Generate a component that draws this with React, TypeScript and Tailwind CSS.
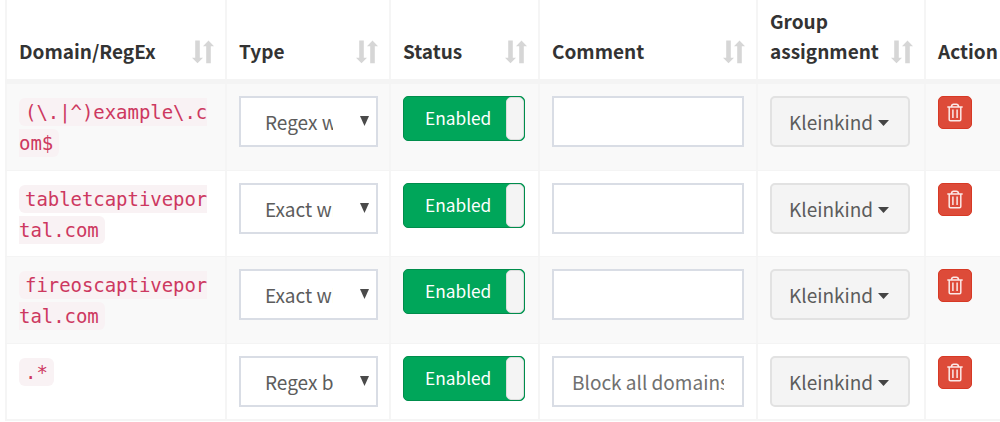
import clsx from 'clsx';

type Domain = {
  lines: string[];
  type: string;
  comment: string;
  height: string;
};

const domains: Domain[] = [
  { lines: ['(\\.|^)example\\.c', 'om$'], type: 'Regex whitelist', comment: '', height: 'h-[87px]' },
  { lines: ['tabletcaptivepor', 'tal.com'], type: 'Exact whitelist', comment: '', height: 'h-[86px]' },
  { lines: ['fireoscaptivepor', 'tal.com'], type: 'Exact whitelist', comment: '', height: 'h-[87px]' },
  { lines: ['.*'], type: 'Regex blacklist', comment: 'Block all domains', height: 'h-[76px]' },
];

const columns = [
  { title: 'Domain/RegEx', sortable: true },
  { title: 'Type', sortable: true },
  { title: 'Status', sortable: true },
  { title: 'Comment', sortable: true },
  { title: 'Group assignment', sortable: true },
  { title: 'Action', sortable: false },
];

const grid = 'grid grid-cols-[220px_164px_149px_218px_168px_76px]';
const cell = 'border-l-2 border-[#f5f5f5] pl-3 pt-3';

function SortIcon() {
  return (
    <svg width="22" height="24" viewBox="0 0 22 24" className="mb-[15px] shrink-0 fill-[#d6d6d6]">
      <path d="M3.2 0.5h4.6v17.2h3.2L5.5 23.3 0 17.7h3.2z" />
      <path d="M14.2 23.2h4.6V6.3H22L16.5 0.5 11 6.3h3.2z" />
    </svg>
  );
}

function TrashIcon() {
  return (
    <svg width="16" height="19" viewBox="0 0 16 19" fill="none" stroke="#fbe9e7" strokeWidth="1.5">
      <path d="M0.3 4h15.4M4.4 3.8C4.6 2 5.4 1.2 6.6 1.2h2.8c1.2 0 2 .8 2.2 2.6M2.2 4v12.6c0 .8.5 1.2 1.2 1.2h9.2c.7 0 1.2-.4 1.2-1.2V4M5.9 6.6v8.4M10.1 6.6v8.4" />
    </svg>
  );
}

function DomainName({ lines }: { lines: string[] }) {
  return (
    <div className="flex flex-col items-start gap-[2.5px] pt-[2px] font-['DejaVu_Sans_Mono',monospace] text-[19px] leading-[28px] tracking-[-0.05px] text-[#cd3860]">
      {lines.map((line, i) => (
        <code
          key={line}
          className={clsx(
            'h-[28px] bg-[#f9f2f4] font-[inherit] whitespace-pre',
            i === 0 && 'rounded-l-md pl-[6px]',
            i === lines.length - 1 && 'rounded-r-md pr-[6px]',
          )}
        >
          {line}
        </code>
      ))}
    </div>
  );
}

function Row({ domain, striped }: { domain: Domain; striped: boolean }) {
  return (
    <div className={clsx(grid, domain.height, 'border-t border-[#f4f4f4]', striped && 'bg-[#f9f9f9]')}>
      <div className={cell}>
        <DomainName lines={domain.lines} />
      </div>
      <div className={cell}>
        <div className="flex h-[51px] w-[139px] items-center justify-between border-2 border-[#d9dde5] bg-white pr-[7px] pl-6 text-[#5c5c5c]">
          <span className="w-[68px] overflow-hidden whitespace-nowrap">{domain.type}</span>
          <svg width="9" height="10" viewBox="0 0 9 10" className="mb-[2px] fill-[#4a4a4a]">
            <path d="M0 0h9L4.5 10z" />
          </svg>
        </div>
      </div>
      <div className={cell}>
        <div className="flex h-[45px] w-[122px] justify-between rounded-[5px] border border-[#008d4c] bg-[#00a65a]">
          <span className="pl-[21px] text-[17.3px] leading-[42px] text-white">Enabled</span>
          <span className="h-[43px] w-[18px] rounded-[5px] border border-[#ddd] bg-[#f4f4f4]" />
        </div>
      </div>
      <div className={cell}>
        <div className="flex h-[51px] w-[192px] items-center border-2 border-[#d9dde5] bg-white px-[18px] text-[#707070]">
          <span className="overflow-hidden whitespace-nowrap">{domain.comment}</span>
        </div>
      </div>
      <div className={cell}>
        <button className="flex h-[51px] w-[140px] items-center rounded-[5px] border-2 border-[#e2e2e2] bg-[#f4f4f4] pl-[17px] text-[#5c5c5c]">
          Kleinkind
          <svg width="11" height="6" viewBox="0 0 11 6" className="mt-[2px] ml-[5px] fill-[#444]">
            <path d="M0 0h11L5.5 6z" />
          </svg>
        </button>
      </div>
      <div className={cell}>
        <button className="flex h-[33px] w-[34px] items-center justify-center rounded-[5px] border border-[#d73925] bg-[#dd4b39]">
          <TrashIcon />
        </button>
      </div>
    </div>
  );
}

export default function App() {
  return (
    <div className="h-[422px] w-[1000px] overflow-hidden bg-white pl-[5px] font-['Noto_Sans_CJK_SC','Noto_Sans',sans-serif] text-[19px] leading-[30px]">
      <div className="w-[995px] border-b-2 border-[#f5f5f5]">
        <div className={clsx(grid, 'h-[83px] border-b-4 border-[#f4f4f4]')}>
          {columns.map((col) => (
            <div
              key={col.title}
              className="flex items-end justify-between border-l-2 border-[#f5f5f5] pr-[11px] pl-3 font-bold text-[#333]"
            >
              <span className="pb-[13px]">{col.title}</span>
              {col.sortable && <SortIcon />}
            </div>
          ))}
        </div>
        {domains.map((domain, i) => (
          <Row key={domain.lines[0]} domain={domain} striped={i % 2 === 0} />
        ))}
      </div>
    </div>
  );
}
